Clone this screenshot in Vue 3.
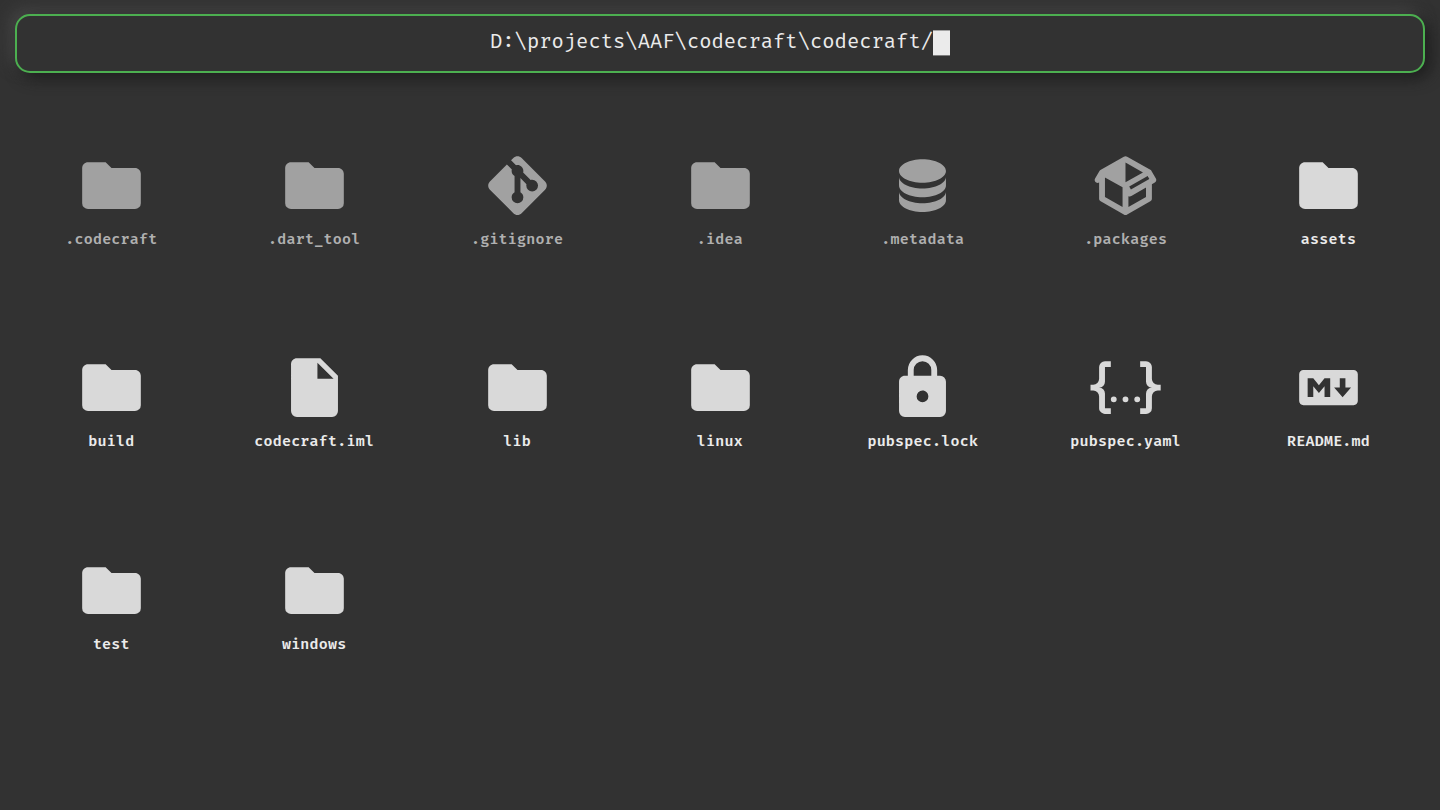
<script setup>
const icons = {
  folder: 'M10,4H4C2.89,4 2,4.89 2,6V18A2,2 0 0,0 4,20H20A2,2 0 0,0 22,18V8C22,6.89 21.1,6 20,6H12L10,4Z',
  git: 'M2.6,10.59L8.38,4.8L10.07,6.5C9.83,7.35 10.22,8.28 11,8.73V14.27C10.4,14.61 10,15.26 10,16A2,2 0 0,0 12,18A2,2 0 0,0 14,16C14,15.26 13.6,14.61 13,14.27V9.41L15.07,11.5C15,11.65 15,11.82 15,12A2,2 0 0,0 17,14A2,2 0 0,0 19,12A2,2 0 0,0 17,10C16.82,10 16.65,10 16.5,10.07L13.93,7.5C14.19,6.57 13.71,5.55 12.78,5.16C12.35,5 11.9,4.96 11.5,5.07L9.8,3.38L10.59,2.6C11.37,1.81 12.63,1.81 13.41,2.6L21.4,10.59C22.19,11.37 22.19,12.63 21.4,13.41L13.41,21.4C12.63,22.19 11.37,22.19 10.59,21.4L2.6,13.41C1.81,12.63 1.81,11.37 2.6,10.59Z',
  database: 'M12,3C7.58,3 4,4.79 4,7C4,9.21 7.58,11 12,11C16.42,11 20,9.21 20,7C20,4.79 16.42,3 12,3M4,9V12C4,14.21 7.58,16 12,16C16.42,16 20,14.21 20,12V9C20,11.21 16.42,13 12,13C7.58,13 4,11.21 4,9M4,14V17C4,19.21 7.58,21 12,21C16.42,21 20,19.21 20,17V14C20,16.21 16.42,18 12,18C7.58,18 4,16.21 4,14Z',
  box: 'M2,10.96C1.5,10.68 1.35,10.07 1.63,9.59L3.13,7C3.24,6.8 3.41,6.66 3.6,6.58L11.43,2.18C11.59,2.06 11.79,2 12,2C12.21,2 12.41,2.06 12.57,2.18L20.47,6.62C20.66,6.72 20.82,6.88 20.91,7.08L22.36,9.6C22.64,10.08 22.47,10.69 22,10.96L21,11.54V16.5C21,16.88 20.79,17.21 20.47,17.38L12.57,21.82C12.41,21.94 12.21,22 12,22C11.79,22 11.59,21.94 11.43,21.82L3.53,17.38C3.21,17.21 3,16.88 3,16.5V10.96C2.7,11.13 2.32,11.14 2,10.96M12,4.15V10.85L17.96,7.5L12,4.15M5,15.91L11,19.29V12.58L5,9.21V15.91M19,15.91V12.69L14,15.59C13.67,15.77 13.3,15.76 13,15.6V19.29L19,15.91M13.85,13.36L20.13,9.73L19.55,8.72L13.27,12.35L13.85,13.36Z',
  file: 'M13,9V3.5L18.5,9M6,2C4.89,2 4,2.89 4,4V20A2,2 0 0,0 6,22H18A2,2 0 0,0 20,20V8L14,2H6Z',
  lock: 'M12,17A2,2 0 0,0 14,15C14,13.89 13.1,13 12,13A2,2 0 0,0 10,15A2,2 0 0,0 12,17M18,8A2,2 0 0,1 20,10V20A2,2 0 0,1 18,22H6A2,2 0 0,1 4,20V10C4,8.89 4.9,8 6,8H7V6A5,5 0 0,1 12,1A5,5 0 0,1 17,6V8H18M12,3A3,3 0 0,0 9,6V8H15V6A3,3 0 0,0 12,3Z',
  json: 'M5,3H7V5H5V10A2,2 0 0,1 3,12A2,2 0 0,1 5,14V19H7V21H5C3.93,20.73 3,20.1 3,19V15A2,2 0 0,0 1,13H0V11H1A2,2 0 0,0 3,9V5A2,2 0 0,1 5,3M19,3A2,2 0 0,1 21,5V9A2,2 0 0,0 23,11H24V13H23A2,2 0 0,0 21,15V19A2,2 0 0,1 19,21H17V19H19V14A2,2 0 0,1 21,12A2,2 0 0,1 19,10V5H17V3H19M12,15A1,1 0 0,1 13,16A1,1 0 0,1 12,17A1,1 0 0,1 11,16A1,1 0 0,1 12,15M8,15A1,1 0 0,1 9,16A1,1 0 0,1 8,17A1,1 0 0,1 7,16A1,1 0 0,1 8,15M16,15A1,1 0 0,1 17,16A1,1 0 0,1 16,17A1,1 0 0,1 15,16A1,1 0 0,1 16,15Z',
  markdown: 'M20.56 18H3.44C2.65 18 2 17.37 2 16.59V7.41C2 6.63 2.65 6 3.44 6H20.56C21.35 6 22 6.63 22 7.41V16.59C22 17.37 21.35 18 20.56 18M6.81 15.19V11.53L8.73 13.88L10.65 11.53V15.19H12.58V8.81H10.65L8.73 11.16L6.81 8.81H4.89V15.19H6.81M19.69 12H17.77V8.81H15.85V12H13.92L16.81 15.28L19.69 12Z'
}

const path = 'D:\\projects\\AAF\\codecraft\\codecraft/'

const entries = [
  ['.codecraft', 'folder'],
  ['.dart_tool', 'folder'],
  ['.gitignore', 'git'],
  ['.idea', 'folder'],
  ['.metadata', 'database'],
  ['.packages', 'box'],
  ['assets', 'folder'],
  ['build', 'folder'],
  ['codecraft.iml', 'file'],
  ['lib', 'folder'],
  ['linux', 'folder'],
  ['pubspec.lock', 'lock'],
  ['pubspec.yaml', 'json'],
  ['README.md', 'markdown'],
  ['test', 'folder'],
  ['windows', 'folder']
].map(([name, icon]) => ({ name, icon, hidden: name.startsWith('.') }))
</script>

<template>
  <main class="explorer">
    <header class="path-bar">
      <span class="path">{{ path }}</span><span class="caret"></span>
    </header>
    <section class="grid">
      <div v-for="e in entries" :key="e.name" class="entry" :class="{ hidden: e.hidden }">
        <svg class="icon" viewBox="0 0 24 24"><path :d="icons[e.icon]" fill-rule="evenodd" /></svg>
        <span class="label">{{ e.name }}</span>
      </div>
    </section>
  </main>
</template>

<style>
body {
  background: #323232;
}
</style>

<style scoped>
.explorer {
  box-sizing: border-box;
  height: 810px;
  padding-top: 14px;
  overflow: hidden;
  background: #323232;
  font-family: "Fira Code", "DejaVu Sans Mono", monospace;
}

.path-bar {
  box-sizing: border-box;
  display: flex;
  align-items: center;
  justify-content: center;
  height: 58.5px;
  margin: 0 15px;
  padding-bottom: 3px;
  border: 2px solid #4caf50;
  border-radius: 15px;
  background: #323232;
  box-shadow: 5px 5px 15px #1c1c1c, -5px -5px 15px #484848;
}

.path {
  color: #ebebeb;
  font-size: 20px;
  letter-spacing: 0;
  line-height: 26px;
  white-space: pre;
}

.caret {
  width: 17px;
  height: 25px;
  margin-top: 2px;
  background: #ebebeb;
  transform: translateY(0.4px);
}

.grid {
  display: grid;
  grid-template-columns: repeat(7, 1fr);
  grid-auto-rows: 202.6px;
  padding: 28.3px 10.3px 0 9.7px;
}

.entry {
  display: flex;
  flex-direction: column;
  align-items: center;
  padding-top: 49px;
}

.icon {
  width: 70.4px;
  height: 70.4px;
  fill: #d9d9d9;
  transform: translate(0.3px, 0.4px);
}

.label {
  margin-top: 9.7px;
  padding-left: 0.5px;
  color: #ebebeb;
  font-size: 14.6px;
  font-weight: 600;
  letter-spacing: 0.25px;
  line-height: 20px;
}

.hidden .icon {
  fill: #a1a1a1;
}

.hidden .label {
  color: #b0b0b0;
}
</style>
